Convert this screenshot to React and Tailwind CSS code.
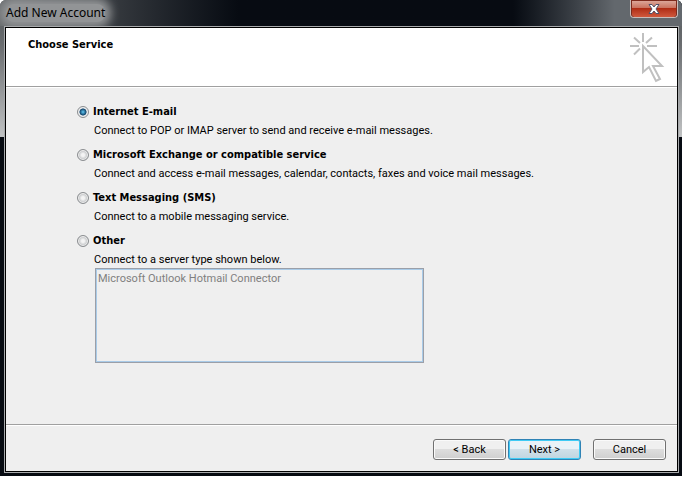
import React from "react";

const services = [
  { id: "internet", title: "Internet E-mail", text: "Connect to POP or IMAP server to send and receive e-mail messages." },
  { id: "exchange", title: "Microsoft Exchange or compatible service", text: "Connect and access e-mail messages, calendar, contacts, faxes and voice mail messages." },
  { id: "sms", title: "Text Messaging (SMS)", text: "Connect to a mobile messaging service." },
  { id: "other", title: "Other", text: "Connect to a server type shown below." },
];

const boldText = "font-bold whitespace-nowrap [font-family:'DejaVu_Sans_Condensed','DejaVu_Sans',sans-serif] [font-stretch:condensed]";

function ServiceOption({ id, title, text }) {
  return (
    <div>
      <div className="flex h-4 items-center gap-1">
        <input
          type="radio"
          id={id}
          name="service"
          defaultChecked={id === "internet"}
          aria-describedby={id + "-text"}
          className="size-3 shrink-0 appearance-none rounded-full border border-[#8a8d90] bg-radial from-[#f4f4f4] from-20% to-[#c4c6c8] to-60% shadow-[inset_0_0_0_1px_#f0f0f0] checked:bg-radial checked:from-[#58bce8] checked:from-5% checked:via-[#12456b] checked:via-45% checked:to-[#e4e8ea] checked:to-55%"
        />
        <label htmlFor={id} className={boldText}>{title}</label>
      </div>
      <p id={id + "-text"} className="mt-[3px] pl-[17px] leading-4 whitespace-nowrap">{text}</p>
    </div>
  );
}

function DialogButton({ children, primary }) {
  return (
    <button
      type="button"
      className={
        "h-[21px] w-[73px] rounded-[3px] border text-center leading-5 " +
        (primary
          ? "border-[#2f83b5] bg-linear-to-b from-[#e9f2f7] from-50% via-[#d0e0e9] via-50% to-[#bfd5e0] shadow-[inset_0_0_0_1px_#3fcbf5]"
          : "border-[#707070] bg-linear-to-b from-[#f0f0f0] from-50% via-[#dddddd] via-50% to-[#cfcfcf] shadow-[inset_0_0_0_1px_#fafafa]")
      }
    >
      {children}
    </button>
  );
}

function ClickPointer() {
  return (
    <svg width="35" height="51" viewBox="0 0 35 51" fill="none" stroke="#c0c0c0" strokeWidth="2" aria-hidden="true">
      <path d="M13 0v9M0 13h9M17 13h10M4 4.500l6 5.500M22 4.500l-6 5.500M4 21.500l6-6" />
      <path d="M13 13v26l6-5 7 14 4-2-7-13h9z" />
    </svg>
  );
}

export default function App() {
  return (
    <div className="flex min-h-screen bg-white pr-[3px] pb-0.5 text-[11px] text-black [font-family:Roboto,sans-serif]">
      <div className="flex grow flex-col overflow-hidden rounded-t-md bg-[#070b12] bg-[linear-gradient(to_bottom,#54585b,#6a6d70_45px,#c0c2c3_137px,#070b12_137px)] pr-[3px] pb-[3px] pl-1">
        <header className="-mr-[3px] -ml-1 flex h-[26px] shrink-0 items-start justify-between overflow-hidden bg-linear-to-r from-[#66696b] via-[#070b12] via-35% to-[#070b12] to-75% pl-1.5">
          <h1 className="mt-1 rounded-lg bg-[#929496] text-[12px] leading-[18px] whitespace-nowrap shadow-[0_0_10px_6px_#929496] [font-family:'Noto_Sans',sans-serif]">Add New Account</h1>
          <div className="flex h-full w-1/4 justify-end bg-linear-to-r from-[#070b12] to-[#63686d] to-60% pr-1">
            <button type="button" aria-label="Close" className="flex h-[18px] w-12 items-center justify-center rounded-b border border-t-0 border-[#c9bcb9] bg-[#7c2a1c]">
              <span className="mx-px flex h-4 grow items-center justify-center rounded-b-sm bg-linear-to-b from-[#dba598] via-[#c8705c] via-45% to-[#c8705c] to-45%">
                <span className="flex h-full grow items-center justify-center rounded-b-sm bg-linear-to-b from-transparent from-45% via-[#ae2a12] via-45% to-[#d0583c]">
                  <svg width="12" height="10" viewBox="0 0 12 10" aria-hidden="true">
                    <path d="M1 .5h3l2 2.500 2-2.500h3L8 5l3 4.500H8L6 7 4 9.500H1L4 5z" fill="#fff" stroke="#50526a" />
                  </svg>
                </span>
              </span>
            </button>
          </div>
        </header>
        <main className="flex grow flex-col border border-[#a8aaac] bg-[#efefef]">
          <div className="flex grow flex-col border border-black">
            <section className="flex shrink-0 items-start justify-between border-b border-[#a0a0a0] bg-white pr-3 pl-[22px]">
              <h2 className={boldText + " pt-[9px] leading-4"}>Choose Service</h2>
              <div className="pt-[5px] pb-0.5"><ClickPointer /></div>
            </section>
            <form className="flex grow flex-col gap-2 border-t border-white pt-4 pl-[71px]">
              {services.map((s) => <ServiceOption key={s.id} {...s} />)}
              <select
                size={4}
                disabled
                aria-label="Server type"
                className="-mt-2 ml-[18px] h-[95px] w-[329px] appearance-none overflow-hidden border border-[#9b9fa8] bg-[#efefef] p-px text-[#5c5c5c] opacity-100 shadow-[inset_0_0_0_1px_#a9cbe8]"
              >
                <option className="px-px py-0.5">Microsoft Outlook Hotmail Connector</option>
              </select>
            </form>
            <footer className="shrink-0 border-t border-[#a0a0a0]">
              <div className="flex justify-end gap-3 border-t border-white pt-[13px] pr-[11px] pb-[11px]">
                <div className="flex gap-0.5">
                  <DialogButton>&lt; Back</DialogButton>
                  <DialogButton primary>Next &gt;</DialogButton>
                </div>
                <DialogButton>Cancel</DialogButton>
              </div>
            </footer>
          </div>
        </main>
      </div>
    </div>
  );
}
